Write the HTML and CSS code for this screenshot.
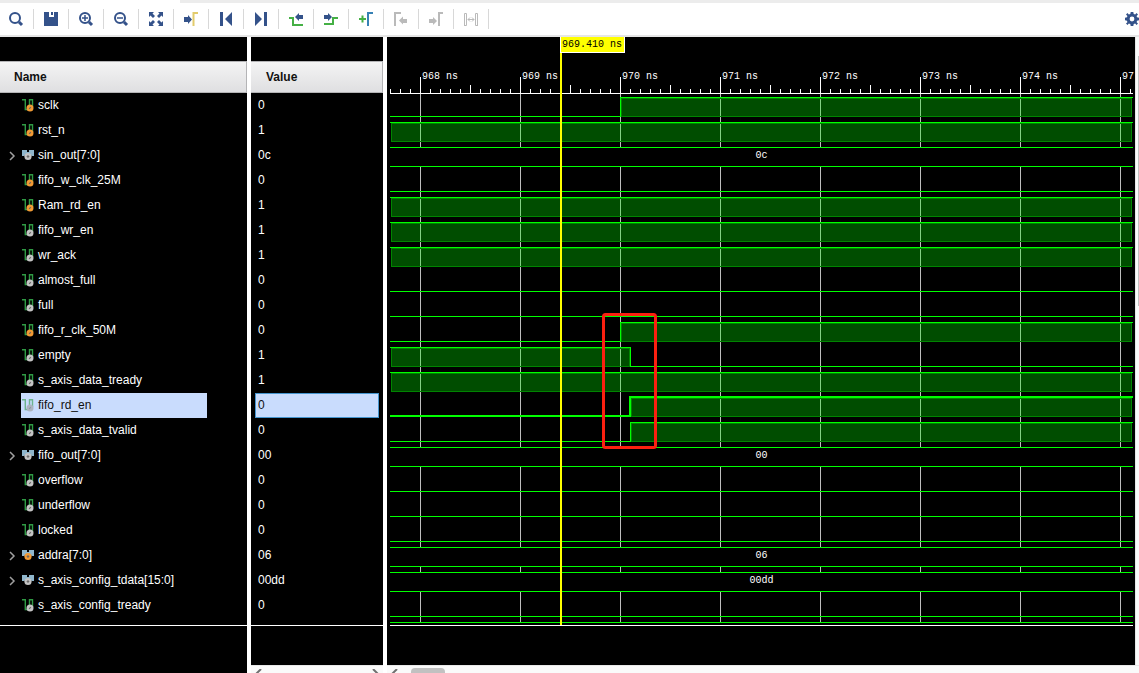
FILE: index.html
```html
<!DOCTYPE html>
<html lang="en">
<head>
<meta charset="utf-8">
<title>Waveform viewer</title>
<link rel="stylesheet" href="styles.css">
</head>
<body>
<svg class="defs" aria-hidden="true">
  <symbol id="scalar" viewBox="0 0 12 13">
    <path d="M0 0.700H3.300V10.500H7.500V0.700H10.500V8" fill="none" stroke="#2f9a44" stroke-width="1.400"/>
    <circle cx="8" cy="9" r="3.500" fill="currentColor"/>
    <path class="dot" d="M7.200 9.800L8.800 8.200" stroke-width="1.200"/>
  </symbol>
  <symbol id="bus" viewBox="0 0 12 13">
    <path d="M0 1H5V3H7V1H12V7H10L8 6H4L2 7H0Z" fill="#8fb6cc"/>
    <circle cx="6" cy="7.500" r="3.600" fill="currentColor"/>
    <circle class="dot" cx="6" cy="7.500" r="0.800"/>
  </symbol>
</svg>

<div class="tabs"><span class="tab"></span></div>
<header class="toolbar">
  <div class="tools" role="toolbar" aria-label="Waveform tools">
    <button aria-label="Search"><svg viewBox="0 0 16 16"><circle cx="7" cy="7" r="5" class="line"/><path d="M11 11L14 14" class="line thick"/></svg></button>
    <button aria-label="Save"><svg viewBox="0 0 16 16"><path d="M1 1H6V6H11V1H15V15H1ZM8 1H10V4H8Z"/></svg></button>
    <button aria-label="Zoom in"><svg viewBox="0 0 16 16"><circle cx="7" cy="7" r="5" class="line"/><path d="M11 11L14 14" class="line thick"/><path d="M4 7H10M7 4V10" class="line thin"/></svg></button>
    <button aria-label="Zoom out"><svg viewBox="0 0 16 16"><circle cx="7" cy="7" r="5" class="line"/><path d="M11 11L14 14" class="line thick"/><path d="M4 7H10" class="line thin"/></svg></button>
    <button aria-label="Zoom fit"><svg viewBox="0 0 16 16"><path d="M1 1H6L4.500 2.500L7 5L5 7L2.500 4.500L1 6ZM15 1V6L13.500 4.500L11 7L9 5L11.500 2.500L10 1ZM1 15V10L2.500 11.500L5 9L7 11L4.500 13.500L6 15ZM15 15H10L11.500 13.500L9 11L11 9L13.500 11.500L15 10Z"/></svg></button>
    <button aria-label="Go to cursor"><svg viewBox="0 0 16 16"><path d="M1 6H5V4L9 8.500L5 13V11H1Z"/><path d="M10.500 15V2H15" class="line yellow"/></svg></button>
    <button aria-label="Go to start"><svg viewBox="0 0 16 16"><path d="M2 1H5V15H2ZM14 1V15L7 8Z"/></svg></button>
    <button aria-label="Go to end"><svg viewBox="0 0 16 16"><path d="M2 1L9 8L2 15ZM11 1H14V15H11Z"/></svg></button>
    <button aria-label="Previous transition"><svg viewBox="0 0 16 16"><path d="M1 7H5V14H15" class="line green"/><path d="M7 6L11 2V4H15V8H11V10Z"/></svg></button>
    <button aria-label="Next transition"><svg viewBox="0 0 16 16"><path d="M1 13H10V7H15" class="line green"/><path d="M9 6L5 2V4H1V8H5V10Z"/></svg></button>
    <button aria-label="Add marker"><svg viewBox="0 0 16 16"><path d="M1 8H8M4.500 4.500V11.500" class="line green"/><path d="M10 15V2H15" class="line cyan"/></svg></button>
    <button aria-label="Previous marker" disabled><svg viewBox="0 0 16 16"><path d="M2 15V2H8" class="line"/><path d="M6 9.500L10 5.500V8H14V12H10V13.500Z"/></svg></button>
    <button aria-label="Next marker" disabled><svg viewBox="0 0 16 16"><path d="M11 15V2H15" class="line"/><path d="M9 10L5 6V8H1V12H5V14Z"/></svg></button>
    <button aria-label="Swap cursors" disabled><svg viewBox="0 0 16 16"><path d="M1.500 15V2.500H3.500V14.500H1.500M14.500 15V2.500H12.500V14.500H14.500M5 8.500H11M7 6.500L5 8.500L7 10.500M9 6.500L11 8.500L9 10.500" class="line hair"/></svg></button>
  </div>
  <button class="settings" aria-label="Settings"><svg viewBox="0 0 14 14"><path fill-rule="evenodd" d="M5.700 0H8.300L8.700 2L10.200 2.500L11.500 1L13 2.600L11.600 4L12 5.300L14 5.700V8.300L12 8.700L11.600 10.200L13 11.600L11.500 13L10.200 11.600L8.700 12L8.300 14H5.700L5.300 12L3.800 11.600L2.500 13L1 11.500L2.400 10.200L2 8.700L0 8.300V5.700L2 5.300L2.400 4L1 2.500L2.500 1L3.800 2.400L5.300 2ZM7 4.600A2.400 2.400 0 1 0 7 9.400A2.400 2.400 0 1 0 7 4.600Z"/></svg></button>
</header>

<main class="viewer">
  <section class="signals">
    <table>
      <thead><tr><th class="name" scope="col">Name</th><th class="value" scope="col">Value</th></tr></thead>
      <tbody id="rows"></tbody>
    </table>
    <div class="signals-end"></div>
    <div class="hscroll value-scroll">
      <svg viewBox="0 0 8 8"><path d="M7 0L2 5L7 10"/></svg>
      <svg viewBox="0 0 8 8"><path d="M1 0L6 5L1 10"/></svg>
    </div>
  </section>
  <section class="wave">
    <div class="canvas" id="canvas"></div>
    <div class="vscroll"><div class="vthumb"></div></div>
    <div class="hscroll wave-scroll">
      <svg viewBox="0 0 8 8"><path d="M7 0L2 5L7 10"/></svg>
      <div class="hthumb"></div>
    </div>
  </section>
</main>
<script src="wave.js"></script>
</body>
</html>
```
FILE: styles.css
```css
* { box-sizing: border-box; }

body {
  margin: 0;
  min-height: 100vh;
  display: flex;
  flex-direction: column;
  background: #fff;
  color: #fff;
  font: 12px/25px "Liberation Sans", Arial, sans-serif;
  overflow: hidden;
}

svg { display: block; }
.defs { position: absolute; width: 0; height: 0; }
button { border: 0; padding: 0; background: none; font: inherit; }

.tabs { height: 3px; padding-left: 80px; background: #ececec; }
.tab { display: block; width: 100px; height: 3px; background: #fff; }

.toolbar {
  display: flex;
  justify-content: space-between;
  align-items: center;
  height: 34px;
  border-bottom: 2px solid #e6e6e6;
}
.tools { display: flex; margin-left: -1px; }
.tools button {
  display: flex;
  align-items: center;
  justify-content: center;
  width: 35px;
  height: 20px;
  border-right: 1px solid #d8d8d8;
}
.toolbar svg { width: 16px; height: 16px; fill: #34528a; stroke: none; }
.toolbar .settings svg { width: 14px; height: 14px; }
.toolbar button:disabled svg { fill: #bababa; }
.toolbar .line { fill: none; stroke: #34528a; stroke-width: 2; }
.toolbar button:disabled .line { stroke: #bababa; }
.toolbar .thick { stroke-width: 3; }
.toolbar .thin { stroke-width: 1.5; }
.toolbar .hair { stroke-width: 1; }
.toolbar .yellow { stroke: #e2cb6c; }
.toolbar .green { stroke: #45b045; }
.toolbar .cyan { stroke: #3681b5; }

.viewer { flex: 1; display: flex; }

.signals {
  position: relative;
  flex: none;
  width: 383px;
  padding-top: 24px;
  display: flex;
  flex-direction: column;
  background: #000;
}
.signals::after {
  content: "";
  position: absolute;
  top: 0;
  bottom: 0;
  left: 247px;
  width: 4px;
  background: #fff;
}
.signals table { width: 100%; table-layout: fixed; border-collapse: separate; border-spacing: 0; }
.signals th {
  height: 32px;
  padding: 0;
  text-align: left;
  border: 1px solid #b4b4b6;
  border-left: 0;
  background: linear-gradient(#f4f4f4, #dfdfe1);
  color: #111;
}
.signals th.name { width: 247px; padding-left: 14px; }
.signals th.value { padding-left: 19px; }
.signals td { height: 25px; padding: 0; }
.signals td.value { padding-left: 8px; }
.cell { display: flex; }
.expand { width: 21px; height: 25px; padding-left: 8px; }
.expand svg { width: 8px; height: 10px; fill: none; stroke: #a0a0a0; stroke-width: 1.5; }
.label { display: flex; align-items: center; gap: 4px; width: 186px; padding-left: 1px; white-space: nowrap; }
.label svg { width: 12px; height: 13px; color: #c4c4c4; }
.label .input { color: #f19a35; }
.dot { fill: #666; stroke: #666; }
.input .dot { fill: #fff; stroke: #fff; }
.reading { display: block; width: 124px; padding-left: 3px; }
.selected .label { background: #c9dcfd; color: #111; }
.selected .label svg { opacity: 0.6; color: #999; }
.selected .reading { background: #c9dcfd; color: #111; outline: 1px solid #4595ce; outline-offset: -1px; }
.signals-end { flex: 1; margin-top: 7px; border-top: 1px solid #fff; }

.hscroll {
  height: 8px;
  display: flex;
  overflow: hidden;
  background: #fafafa;
  border-top: 1px solid #e8e8e8;
}
.hscroll svg { width: 8px; height: 8px; margin-top: 3px; fill: none; stroke: #707070; stroke-width: 2; }
.value-scroll { justify-content: space-between; margin-left: 251px; padding: 0 3px; }
.wave-scroll { grid-column: 1 / -1; padding-left: 3px; gap: 13px; }
.hthumb { width: 34px; height: 12px; margin-top: 2px; border-radius: 4px; background: #c1c1c1; flex: none; }

.wave {
  flex: 1;
  min-width: 0;
  margin-left: 4px;
  display: grid;
  grid-template-columns: minmax(0, 1fr) 4px;
  grid-template-rows: 1fr auto;
}
.canvas { min-height: 590px; background: #000; overflow: hidden; }
.canvas svg { width: 100%; height: 590px; shape-rendering: crispEdges; }
.canvas text { font: 10px "Liberation Mono", monospace; fill: #fff; }
.canvas .center { text-anchor: middle; }
.canvas .flag-text { fill: #000; }
.vscroll { padding: 19px 0 0 2px; background: #fafafa; border-left: 1px solid #e6e6e6; }
.vthumb { height: 250px; background: #c1c1c1; }
.axis { fill: #fff; }
.grid { fill: #bebebe; }
.high { fill: #00ff00; fill-opacity: 0.3; }
.edge { fill: none; stroke: #008400; }
.trace { fill: none; stroke: #00ff00; }
.trace.bold { stroke-width: 2; }
.bus-body { fill: #000; }
.cursor { fill: #ffff00; }
.flag { fill: #ffff00; stroke: #fff; }
.highlight { fill: none; stroke: #fb2010; stroke-width: 3; shape-rendering: auto; }
```
FILE: wave.js
```js
// value: level at the cursor; edge: time in ns at which the level changes
const signals = [
  { name: "sclk", value: "0", input: true, edge: 970 },
  { name: "rst_n", value: "1", input: true },
  { name: "sin_out[7:0]", value: "0c", bus: true },
  { name: "fifo_w_clk_25M", value: "0", input: true },
  { name: "Ram_rd_en", value: "1", input: true },
  { name: "fifo_wr_en", value: "1" },
  { name: "wr_ack", value: "1" },
  { name: "almost_full", value: "0" },
  { name: "full", value: "0" },
  { name: "fifo_r_clk_50M", value: "0", input: true, edge: 970 },
  { name: "empty", value: "1", edge: 970.1 },
  { name: "s_axis_data_tready", value: "1" },
  { name: "fifo_rd_en", value: "0", edge: 970.1, selected: true },
  { name: "s_axis_data_tvalid", value: "0", edge: 970.1 },
  { name: "fifo_out[7:0]", value: "00", bus: true },
  { name: "overflow", value: "0" },
  { name: "underflow", value: "0" },
  { name: "locked", value: "0" },
  { name: "addra[7:0]", value: "06", bus: true, input: true },
  { name: "s_axis_config_tdata[15:0]", value: "00dd", bus: true },
  { name: "s_axis_config_tready", value: "0" }
];

const chevron = '<svg viewBox="0 0 8 10"><path d="M2 1L6 5L2 9"/></svg>';

document.getElementById("rows").innerHTML = signals.map(s => `
  <tr class="${s.selected ? "selected" : ""}">
    <td><div class="cell">
      ${s.bus ? `<button class="expand" aria-label="Expand ${s.name}">${chevron}</button>` : '<span class="expand"></span>'}
      <span class="label"><svg class="${s.input ? "input" : ""}"><use href="#${s.bus ? "bus" : "scalar"}"/></svg>${s.name}</span>
    </div></td>
    <td class="value"><span class="reading">${s.value}</span></td>
  </tr>`).join("");

const canvas = document.getElementById("canvas");
const LEFT = 3, PX_PER_NS = 100, AXIS = 56, ROW = 25, BOTTOM = 588;
const xOf = t => Math.round((t - 968) * PX_PER_NS) + 33;
const rect = (c, x, y, w, h) => `<rect class="${c}" x="${x}" y="${y}" width="${w}" height="${h}"/>`;

function drawLevel(s, i, right) {
  const top = 60 + i * ROW, low = top + 19;
  const bold = s.selected ? " bold" : "";
  const line = d => `<path class="trace${bold}" d="${d}"/>`;
  const yt = top + (bold ? 0 : 0.5), yl = low + (bold ? 0 : 0.5);
  const block = (a, b) => rect("high", a, top + 1, b - a, 19) +
    `<rect class="edge" x="${a + 0.5}" y="${top + 1.5}" width="${b - a - 1}" height="18"/>`;
  if (s.bus) {
    return rect("bus-body", LEFT, top, right - LEFT, 20) +
      line(`M${LEFT} ${yt}H${right}M${LEFT} ${yl}H${right}`) +
      `<text class="center" x="${(LEFT + right) / 2}" y="${top + 11}">${s.value}</text>`;
  }
  const high = s.value === "1";
  if (!s.edge) {
    return high ? block(LEFT + 1, right - 1) + line(`M${LEFT} ${yt}H${right}`)
                : line(`M${LEFT} ${yl}H${right}`);
  }
  const x = xOf(s.edge), xm = bold ? x : x + 0.5;
  return high ? block(LEFT + 1, x) + line(`M${LEFT} ${yt}H${xm}V${yl}H${right}`)
              : block(x + 1, right - 1) + line(`M${LEFT} ${yl}H${xm}V${yt}H${right}`);
}

function draw() {
  const width = canvas.clientWidth, right = width - 2;
  let out = "";
  for (let x = LEFT, n = 0; x < right; x += 10, n++) {
    const major = n % 10 === 3, mid = n % 10 === 8;
    const h = major ? 16 : mid ? 8 : 4;
    if (major) {
      const ns = 968 + Math.floor(n / 10);
      out += rect("grid", x, AXIS, 1, BOTTOM - AXIS - 3);
      out += `<text x="${x + 2}" y="42">${x + 38 > width ? String(ns).slice(0, 2) : ns + " ns"}</text>`;
    }
    out += rect("axis", x, AXIS - h, 1, h);
  }
  out += rect("axis", LEFT, AXIS, right - LEFT, 1);
  signals.forEach((s, i) => { out += drawLevel(s, i, right); });
  out += `<path class="trace" d="M${LEFT} 585.5H${right}"/>`;
  out += rect("axis", LEFT, BOTTOM, right - LEFT, 1);
  out += rect("cursor", 173, 0, 2, BOTTOM);
  out += '<rect class="flag" x="173.5" y="-0.5" width="64" height="16"/><text class="flag-text" x="175" y="10">969.410 ns</text>';
  out += '<rect class="highlight" x="216.5" y="277.5" width="52" height="133" rx="2"/>';
  canvas.innerHTML = `<svg role="img" aria-label="Signal waveforms">${out}</svg>`;
}

draw();
window.addEventListener("resize", draw);
```
